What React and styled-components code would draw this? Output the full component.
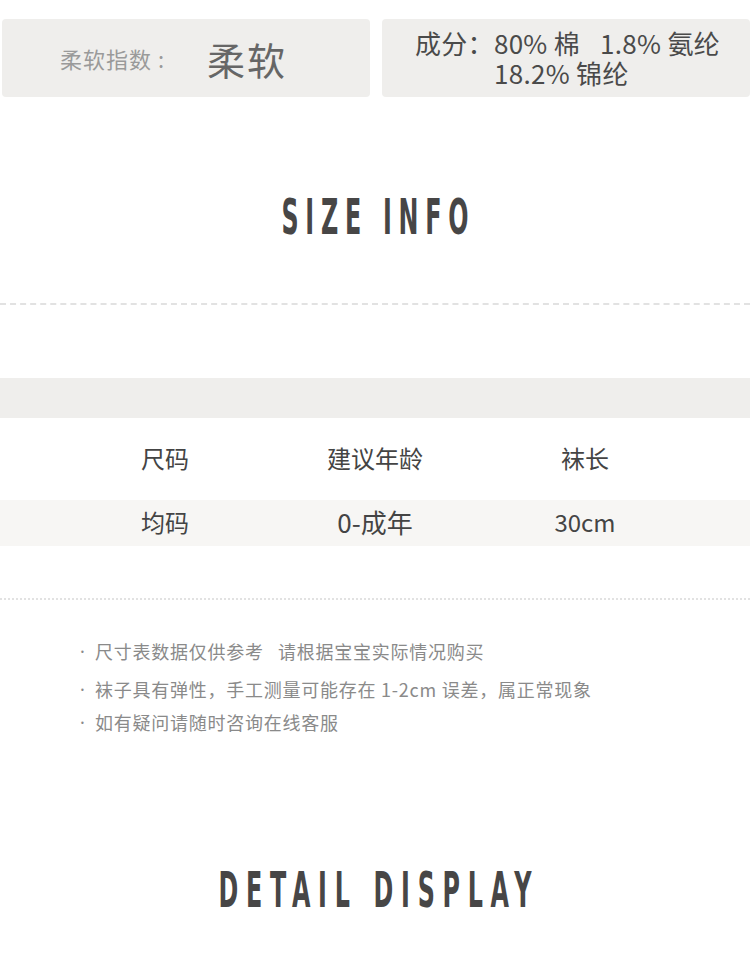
import styled, { createGlobalStyle } from "styled-components";

const GlobalStyle = createGlobalStyle`
  body {
    margin: 0;
    background: #fff;
    font-family: "Noto Sans CJK SC", "Noto Sans", sans-serif;
  }
`;

const Page = styled.div`
  width: 750px;
  height: 975px;
  overflow: hidden;
  background: #fff;
`;

const CardRow = styled.div`
  display: grid;
  grid-template-columns: 368px 368px;
  justify-content: space-between;
  padding: 19px 0 0 2px;
`;

const Card = styled.div`
  height: 78px;
  background: #efeeec;
  border-radius: 4px;
  display: flex;
  align-items: center;
  padding-left: ${(p) => p.$pad || 0}px;
  box-sizing: border-box;
`;

const SoftLabel = styled.span`
  font-size: 22px;
  letter-spacing: 1px;
  color: #9a9a9a;
  width: 147px;
`;

const Colon = styled.span`
  padding-left: 6px;
`;

const SoftValue = styled.span`
  font-size: 38px;
  color: #666;
  letter-spacing: 2px;
`;

const Composition = styled.div`
  font-size: 26px;
  line-height: 30px;
  color: #4a4a4a;
  padding-left: 33px;
  letter-spacing: 0.3px;
`;

const CompLine = styled.div`
  white-space: nowrap;
  padding-left: ${(p) => p.$indent || 0}px;
`;

const Gap = styled.span`
  display: inline-block;
  width: ${(p) => p.$w}px;
`;

const Heading = styled.h2`
  margin: 0;
  text-align: center;
  font-family: "DejaVu Sans Condensed", "DejaVu Sans", sans-serif;
  font-weight: bold;
  font-size: 49px;
  line-height: 1;
  color: #474646;
  letter-spacing: ${(p) => p.$ls}px;
  text-indent: ${(p) => p.$ls}px;
  transform: scaleX(0.54);
  padding: ${(p) => p.$pad};
`;

const Divider = styled.div`
  height: 0;
  border-top: 2px ${(p) => p.$style} #e2e2e2;
  margin: ${(p) => p.$margin};
`;

const Band = styled.div`
  height: 40px;
  background: #efeeec;
  margin-top: 73px;
`;

const TableRow = styled.div`
  display: grid;
  grid-template-columns: repeat(3, 210px);
  padding-left: 60px;
  height: ${(p) => p.$h}px;
  align-items: center;
  background: ${(p) => p.$bg || "transparent"};
`;

const Cell = styled.div`
  text-align: center;
  font-size: ${(p) => (p.$big ? 26 : 24)}px;
  color: #444;
  padding-bottom: 4px;
`;

const Notes = styled.ul`
  list-style: none;
  margin: 0;
  padding: 39px 0 0 80px;
  font-size: 18px;
  letter-spacing: 0.75px;
  color: #8a8a8a;
`;

const Note = styled.li`
  display: flex;
  line-height: 24px;
  margin-bottom: ${(p) => p.$mb}px;
  white-space: pre;
`;

const Dot = styled.span`
  width: 15px;
  font-family: "Noto Sans", sans-serif;
`;

export default function App() {
  return (
    <Page>
      <GlobalStyle />
      <CardRow>
        <Card $pad={58}>
          <SoftLabel>
            柔软指数<Colon>:</Colon>
          </SoftLabel>
          <SoftValue>柔软</SoftValue>
        </Card>
        <Card>
          <Composition>
            <CompLine>
              成分：80% 棉<Gap $w={20} />1.8% 氨纶
            </CompLine>
            <CompLine $indent={79}>18.2% 锦纶</CompLine>
          </Composition>
        </Card>
      </CardRow>

      <Heading $pad="96px 0 0" $ls={12.5}>SIZE INFO</Heading>
      <Divider $style="dashed" $margin="61px 0 0" />
      <Band />

      <TableRow $h={82}>
        <Cell>尺码</Cell>
        <Cell>建议年龄</Cell>
        <Cell>袜长</Cell>
      </TableRow>
      <TableRow $h={46} $bg="#f7f6f4">
        <Cell>均码</Cell>
        <Cell $big>0-成年</Cell>
        <Cell>30cm</Cell>
      </TableRow>

      <Divider $style="dotted" $margin="52px 0 0" />

      <Notes>
        <Note $mb={14}>
          <Dot>·</Dot>尺寸表数据仅供参考   请根据宝宝实际情况购买
        </Note>
        <Note $mb={9}>
          <Dot>·</Dot>袜子具有弹性，手工测量可能存在 1-2cm 误差，属正常现象
        </Note>
        <Note $mb={0}>
          <Dot>·</Dot>如有疑问请随时咨询在线客服
        </Note>
      </Notes>

      <Heading $pad="132px 0 0" $ls={14.3}>DETAIL DISPLAY</Heading>
    </Page>
  );
}
